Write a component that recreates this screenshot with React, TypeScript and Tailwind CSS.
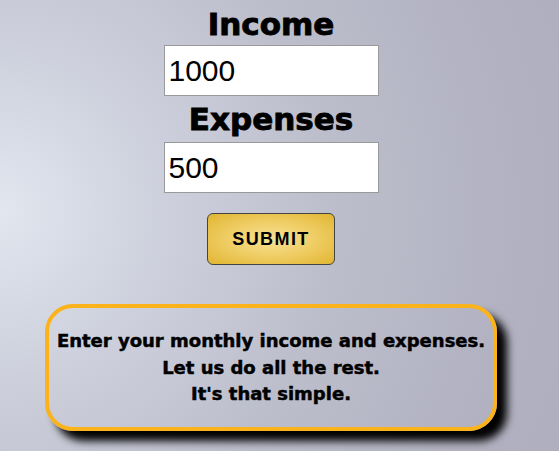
import { useState } from "react";

export default function App() {
  const [income, setIncome] = useState("1000");
  const [expenses, setExpenses] = useState("500");

  const heading =
    "text-[31px] leading-[36px] font-bold text-black font-['DejaVu_Sans',sans-serif] [-webkit-text-stroke:0.9px_#000]";
  const field =
    "w-[215px] h-[51px] border border-[#9a9a9a] bg-white pl-[4px] text-[30px] text-black outline-none font-['Liberation_Sans',Arial,sans-serif]";

  return (
    <div className="min-h-[451px] w-full bg-[radial-gradient(circle_at_0px_210px,#e1e6ef_0px,#cdd0dc_170px,#bdbecc_330px,#b1b1c1_520px,#acacbc_700px)]">
      {/* content centred as if a scrollbar took the right 17px */}
      <div className="w-[542px] flex flex-col items-center pt-[6px]">
        <h1 className={heading}>Income</h1>
        <input
          value={income}
          onChange={(e) => setIncome(e.target.value)}
          className={`${field} mt-[3px]`}
        />
        <h1 className={`${heading} mt-[5px]`}>Expenses</h1>
        <input
          value={expenses}
          onChange={(e) => setExpenses(e.target.value)}
          className={`${field} mt-[5px] h-[50px]`}
        />

        <button className="mt-[20px] w-[128px] h-[52px] rounded-[6px] border-[1.5px] border-[#444] bg-[radial-gradient(ellipse_at_center,#f8e196_0%,#efcd64_50%,#e1b531_100%)] text-[18px] font-bold tracking-[1.4px] text-black font-['Liberation_Sans',Arial,sans-serif]">
          SUBMIT
        </button>

        {/* Info box */}
        <div className="mt-[39px] w-[452px] h-[127px] rounded-[28px] border-4 border-[#fbb31b] shadow-[10px_10px_9px_#000] pt-[20px] text-center text-[18px] leading-[26.5px] font-bold text-black font-['DejaVu_Sans',sans-serif] [-webkit-text-stroke:0.5px_#000]">
          <p>Enter your monthly income and expenses.</p>
          <p>Let us do all the rest.</p>
          <p>It's that simple.</p>
        </div>
      </div>
    </div>
  );
}
